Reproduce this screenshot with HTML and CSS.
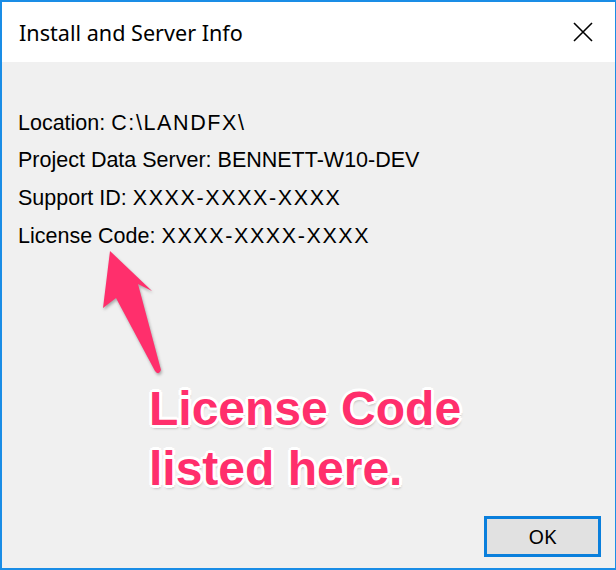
FILE: index.html
```html
<!DOCTYPE html>
<html lang="en">
<head>
    <meta charset="UTF-8">
    <meta name="viewport" content="width=device-width, initial-scale=1.0">
    <title>Install and Server Info</title>
    <link rel="stylesheet" href="styles.css">
</head>
<body>
    <div class="window">
        <!-- Title bar with caption and close button -->
        <header class="titlebar">
            <h1 class="title">Install and Server Info</h1>
            <button class="close" aria-label="Close">
                <svg width="20" height="20" viewBox="0 0 20 20">
                    <path d="M1 1 L19 19 M19 1 L1 19" stroke="#000" stroke-width="1.6" fill="none"/>
                </svg>
            </button>
        </header>

        <!-- Dialog body -->
        <main class="content">
            <div class="info">
                <p>Location: <span class="value">C:\LANDFX\</span></p>
                <p>Project Data Server: BENNETT-W10-DEV</p>
                <p>Support ID: <span class="value">XXXX-XXXX-XXXX</span></p>
                <p>License Code: <span class="value">XXXX-XXXX-XXXX</span></p>
            </div>
            <div class="actions">
                <button class="ok">OK</button>
            </div>
        </main>

        <!-- Annotation laid over the dialog -->
        <svg class="arrow" width="616" height="570" viewBox="0 0 616 570">
            <path d="M110 251 L152 291 L138 284 L161 370 Q159 376 155 371 L116 298 L103 308 Z" fill="#ff2f6c"/>
        </svg>
        <div class="callout">License Code<br>listed here.</div>
    </div>
</body>
</html>
```

FILE: styles.css
```css
/* Page reset */
body {
    margin: 0;
    padding: 0;
    background-color: #ffffff;
}
/* Dialog frame */
.window {
    position: relative;
    width: 616px;
    height: 570px;
    box-sizing: border-box;
    border: 2px solid #1a8de6;
    border-right-width: 1px;
    display: flex;
    flex-direction: column;
    background-color: #f0f0f0;
    overflow: hidden;
}
/* Title bar */
.titlebar {
    height: 60px;
    background-color: #ffffff;
    display: flex;
    align-items: center;
    justify-content: space-between;
    padding: 0 22px 0 17px;
}
.title {
    margin: 0;
    font-family: 'Noto Sans', sans-serif;
    font-size: 21.6px;
    font-weight: normal;
    color: #000;
}
.close {
    border: none;
    background: none;
    padding: 0;
    width: 20px;
    height: 20px;
    display: flex;
}
/* Body content */
.content {
    flex: 1;
    display: flex;
    flex-direction: column;
    padding: 42.5px 14px 11px 16px;
}
.info p {
    margin: 0;
    font-family: 'Liberation Sans', Arial, sans-serif;
    font-size: 21.5px;
    line-height: 37.7px;
    color: #000;
}
.value {
    letter-spacing: 1.6px;
}
.actions {
    margin-top: auto;
    display: flex;
    justify-content: flex-end;
}
.ok {
    width: 117px;
    height: 41px;
    box-sizing: border-box;
    border: 3px solid #0a7fdc;
    background-color: #e1e1e1;
    font-family: 'Noto Sans', sans-serif;
    font-size: 20px;
    color: #000;
    padding: 0;
}
/* Pink annotation */
.arrow {
    position: absolute;
    left: -2px;
    top: -2px;
    filter: drop-shadow(1px 2px 1.5px rgba(0, 0, 0, 0.3));
}
.callout {
    position: absolute;
    left: 147px;
    top: 377px;
    font-family: 'Liberation Sans', Arial, sans-serif;
    font-weight: bold;
    font-size: 48px;
    line-height: 60px;
    color: #ff2f6c;
    text-shadow:
        3px 0 0 #fff, -3px 0 0 #fff, 0 3px 0 #fff, 0 -3px 0 #fff,
        2px 2px 0 #fff, -2px 2px 0 #fff, 2px -2px 0 #fff, -2px -2px 0 #fff,
        1px 3px 3px rgba(0, 0, 0, 0.35);
}
```
